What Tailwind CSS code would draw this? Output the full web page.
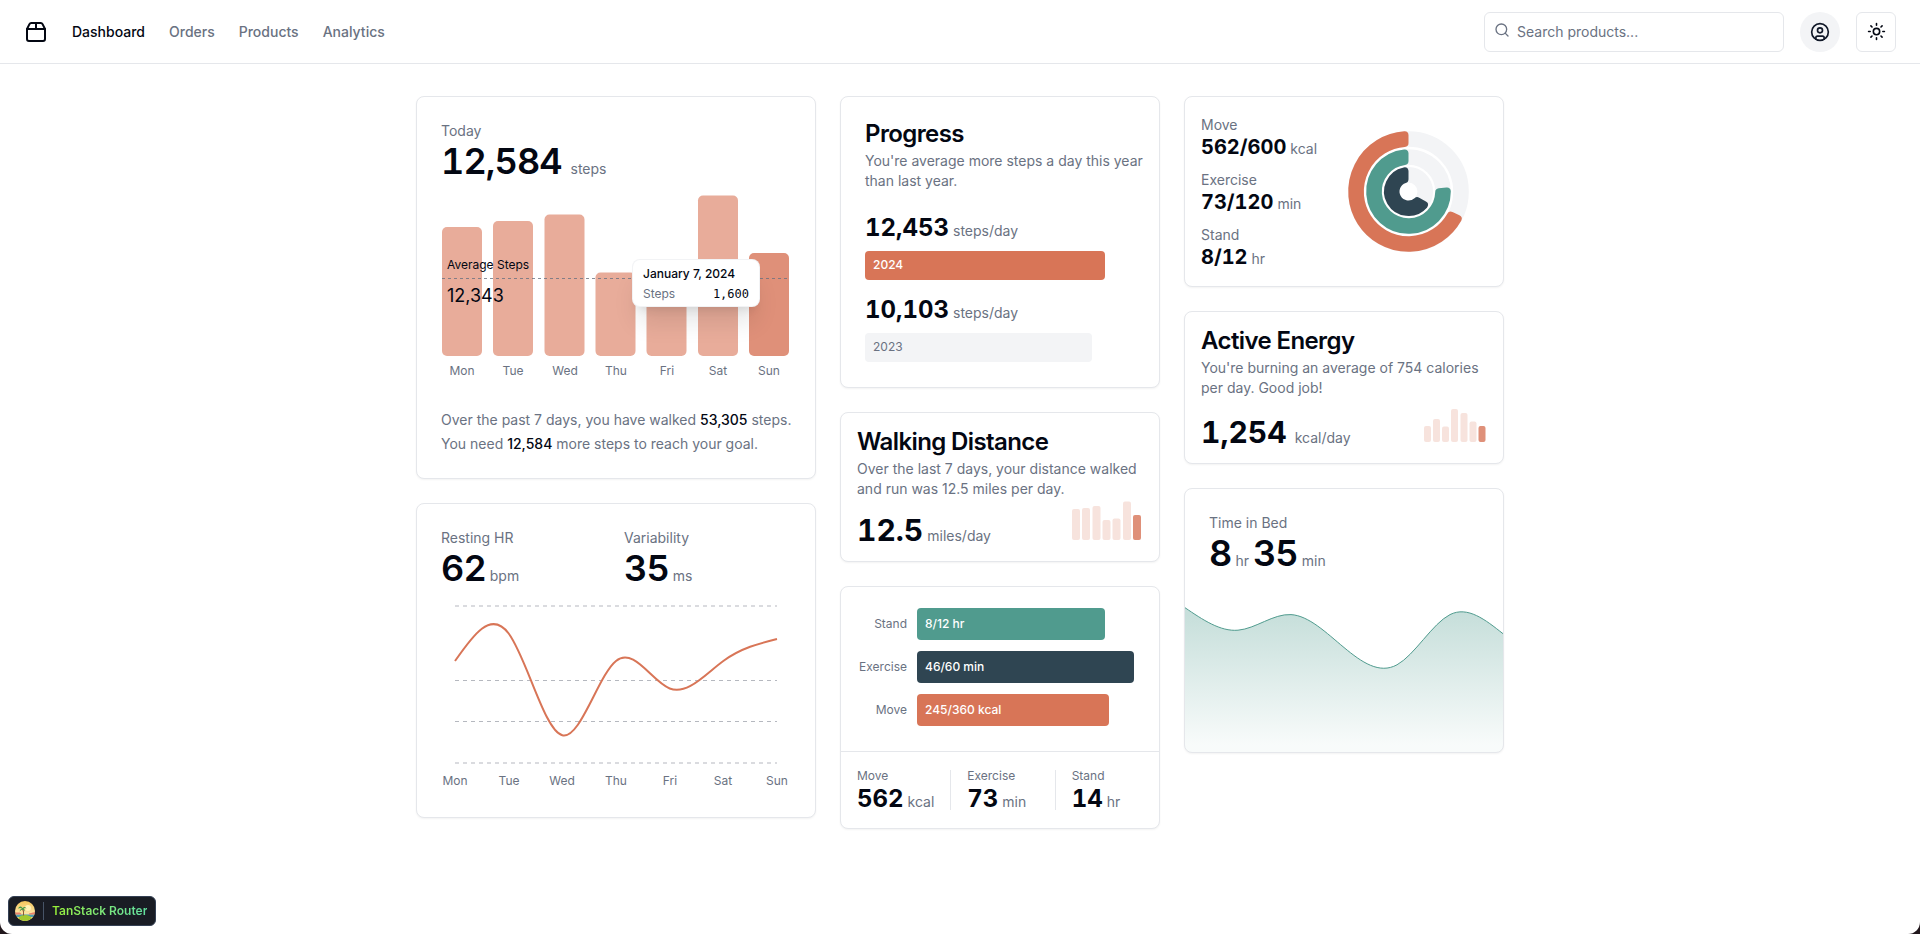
<!DOCTYPE html>
<html lang="en">
<head>
<meta charset="utf-8">
<meta name="viewport" content="width=device-width, initial-scale=1">
<title>Dashboard</title>
<script src="https://cdn.jsdelivr.net/npm/@tailwindcss/browser@4"></script>
</head>
<body class="bg-[#21171c] font-[Inter,sans-serif] text-gray-950 antialiased">
<div class="flex min-h-screen flex-col rounded-b-xl bg-white">

<header class="flex h-16 items-center gap-4 border-b border-gray-200 px-6">
  <nav class="flex items-center gap-6 text-sm font-medium text-gray-500">
    <a href="#" aria-label="Home" class="text-gray-950">
      <svg class="size-6" viewBox="0 0 24 24" fill="none" stroke="currentColor" stroke-width="2" stroke-linecap="round" stroke-linejoin="round"><path d="M3 9h18v10a2 2 0 0 1-2 2H5a2 2 0 0 1-2-2V9Z"/><path d="m3 9 2.45-4.9A2 2 0 0 1 7.24 3h9.52a2 2 0 0 1 1.8 1.1L21 9"/><path d="M12 3v6"/></svg>
    </a>
    <a href="#" class="text-gray-950">Dashboard</a>
    <a href="#">Orders</a>
    <a href="#">Products</a>
    <a href="#">Analytics</a>
  </nav>
  <form class="relative ml-auto">
    <svg class="absolute top-2.5 left-2.5 size-4 text-gray-500" viewBox="0 0 24 24" fill="none" stroke="currentColor" stroke-width="2" stroke-linecap="round" stroke-linejoin="round"><circle cx="11" cy="11" r="8"/><path d="m21 21-4.3-4.3"/></svg>
    <input type="search" aria-label="Search products" placeholder="Search products..." class="h-10 w-[300px] rounded-md border border-gray-200 bg-white pr-3 pl-8 text-sm placeholder:text-gray-500">
  </form>
  <button type="button" aria-label="Account" class="flex size-10 items-center justify-center rounded-full bg-gray-100 text-gray-900">
    <svg class="size-5" viewBox="0 0 24 24" fill="none" stroke="currentColor" stroke-width="2" stroke-linecap="round" stroke-linejoin="round"><circle cx="12" cy="12" r="10"/><circle cx="12" cy="10" r="3"/><path d="M7 20.662V19a2 2 0 0 1 2-2h6a2 2 0 0 1 2 2v1.662"/></svg>
  </button>
  <button type="button" aria-label="Toggle theme" class="flex size-10 items-center justify-center rounded-md border border-gray-200">
    <svg class="size-[19px]" viewBox="0 0 24 24" fill="none" stroke="currentColor" stroke-width="2" stroke-linecap="round" stroke-linejoin="round"><circle cx="12" cy="12" r="4"/><path d="M12 2v2M12 20v2M4.93 4.93l1.41 1.41M17.66 17.66l1.41 1.41M2 12h2M20 12h2M6.34 17.66l-1.41 1.41M19.07 4.93l-1.41 1.41"/></svg>
  </button>
</header>

<main class="mx-auto grid w-full max-w-6xl grid-cols-1 items-start gap-6 p-8 lg:grid-cols-[5fr_4fr_4fr]">

  <div class="grid min-w-0 grid-cols-1 gap-6">
    <section class="rounded-lg border border-gray-200 bg-white shadow-xs">
      <div class="p-6 pb-2">
        <p class="text-sm text-gray-500">Today</p>
        <h2 class="text-4xl font-semibold tracking-tight tabular-nums">12,584 <span class="text-sm font-normal tracking-normal text-gray-500">steps</span></h2>
      </div>
      <div class="relative mx-6 mb-6">
        <svg class="h-auto w-full" viewBox="0 0 350 197" role="img" aria-label="Steps per day">
          <g fill="#e8ac9a">
            <rect x="1" y="38" width="40" height="129" rx="5"/>
            <rect x="52" y="32" width="40" height="135" rx="5"/>
            <rect x="103.500" y="25.500" width="40" height="141.500" rx="5"/>
            <rect x="154.500" y="83.500" width="40" height="83.500" rx="5"/>
            <rect x="205.500" y="77" width="40" height="90" rx="5"/>
            <rect x="257" y="6.500" width="40" height="160.500" rx="5"/>
          </g>
          <rect x="308" y="64" width="40" height="103" rx="5" fill="#df9079"/>
          <path d="M1 89.500H348" stroke="#6b7280" stroke-dasharray="3 3" opacity=".8"/>
          <text x="6" y="80" class="fill-gray-950 text-xs">Average Steps</text>
          <text x="6" y="113" class="fill-gray-950 text-lg">12,343</text>
          <g class="fill-gray-500 text-xs" text-anchor="middle">
            <text x="21" y="186">Mon</text><text x="72" y="186">Tue</text><text x="124" y="186">Wed</text><text x="175" y="186">Thu</text><text x="226" y="186">Fri</text><text x="277" y="186">Sat</text><text x="328" y="186">Sun</text>
          </g>
        </svg>
        <div class="absolute top-[70px] left-[191px] grid w-32 gap-1.5 rounded-lg border border-gray-200/50 bg-white px-2.5 py-1.5 text-xs shadow-xl">
          <div class="font-medium">January 7, 2024</div>
          <div class="flex justify-between leading-none"><span class="text-gray-500">Steps</span><span class="font-['DejaVu_Sans_Mono',monospace] font-medium">1,600</span></div>
        </div>
      </div>
      <div class="grid gap-1 pr-2 pb-6 pl-6 text-sm text-gray-500">
        <p>Over the past 7 days, you have walked <span class="font-medium text-gray-950">53,305</span> steps.</p>
        <p>You need <span class="font-medium text-gray-950">12,584</span> more steps to reach your goal.</p>
      </div>
    </section>

    <section class="rounded-lg border border-gray-200 bg-white shadow-xs">
      <div class="flex gap-4 p-6 pb-2">
        <div class="flex-1">
          <p class="text-sm text-gray-500">Resting HR</p>
          <h2 class="flex items-baseline gap-1 text-4xl font-semibold tracking-tight tabular-nums">62 <span class="text-sm font-normal tracking-normal text-gray-500">bpm</span></h2>
        </div>
        <div class="flex-1">
          <p class="text-sm text-gray-500">Variability</p>
          <h2 class="flex items-baseline gap-1 text-4xl font-semibold tracking-tight tabular-nums">35 <span class="text-sm font-normal tracking-normal text-gray-500">ms</span></h2>
        </div>
      </div>
      <div class="px-6 pb-6">
        <svg class="h-auto w-full" viewBox="0 0 350 197" fill="none" role="img" aria-label="Resting heart rate per day">
          <path d="M14 10H336M14 84.500H336M14 125.500H336M14 167H336" stroke="#6b7280" stroke-opacity=".5" stroke-dasharray="4 4"/>
          <path d="M14 65C31.9 39.3 49.8 13.7 67.7 37.5C85.6 61.3 103.4 134.7 121.3 139.250C139.2 143.8 157.1 79.5 175 65C192.9 50.5 210.8 85.6 228.7 92.5C246.6 99.4 264.5 78 282.3 65C300.2 52 318.1 47.5 336 43" stroke="#d87557" stroke-width="2"/>
          <g class="fill-gray-500 text-xs" text-anchor="middle">
            <text x="14" y="189">Mon</text><text x="68" y="189">Tue</text><text x="121" y="189">Wed</text><text x="175" y="189">Thu</text><text x="229" y="189">Fri</text><text x="282" y="189">Sat</text><text x="336" y="189">Sun</text>
          </g>
        </svg>
      </div>
    </section>
  </div>

  <div class="grid min-w-0 grid-cols-1 gap-6">
    <section class="rounded-lg border border-gray-200 bg-white p-6 shadow-xs">
      <h2 class="text-2xl leading-[26px] font-semibold tracking-tight">Progress</h2>
      <p class="-mr-4 mt-1 text-sm text-gray-500">You're average more steps a day this year than last year.</p>
      <div class="mt-6 grid gap-4">
        <div class="grid gap-2">
          <div class="flex items-baseline gap-1 text-2xl leading-[26px] font-bold tabular-nums">12,453 <span class="text-sm leading-none font-normal text-gray-500">steps/day</span></div>
          <div class="flex h-8 items-center"><div class="flex h-[29px] items-center rounded-sm bg-[#d87557] px-2 text-xs font-medium text-white" style="width:88.9%">2024</div></div>
        </div>
        <div class="grid gap-2">
          <div class="flex items-baseline gap-1 text-2xl leading-[26px] font-bold tabular-nums">10,103 <span class="text-sm leading-none font-normal text-gray-500">steps/day</span></div>
          <div class="flex h-8 items-center"><div class="flex h-[29px] items-center rounded-sm bg-gray-100 px-2 text-xs text-gray-500" style="width:84.1%">2023</div></div>
        </div>
      </div>
    </section>

    <section class="rounded-lg border border-gray-200 bg-white p-4 shadow-xs">
      <h2 class="text-2xl leading-[26px] font-semibold tracking-tight">Walking Distance</h2>
      <p class="mt-1 text-sm text-gray-500">Over the last 7 days, your distance walked and run was 12.5 miles per day.</p>
      <div class="flex items-baseline justify-between gap-4">
        <div class="flex items-baseline gap-1 text-3xl leading-none font-bold tabular-nums">12.5 <span class="text-sm leading-none font-normal text-gray-500">miles/day</span></div>
        <svg class="h-[42px] w-[72px]" viewBox="0 0 72 42" fill="#f7e3dd" role="img" aria-label="Distance per day">
          <rect x="1" y="10" width="8" height="31" rx="2"/><rect x="11" y="9" width="8" height="32" rx="2"/><rect x="21.500" y="7" width="8" height="34" rx="2"/><rect x="31.500" y="21" width="8" height="20" rx="2"/><rect x="41.500" y="19.500" width="8" height="21.500" rx="2"/><rect x="52" y="2.500" width="8" height="38.500" rx="2"/><rect x="62" y="16" width="8" height="25" rx="2" fill="#df9079"/>
        </svg>
      </div>
    </section>

    <section class="rounded-lg border border-gray-200 bg-white shadow-xs">
      <div class="grid grid-cols-[50px_1fr] items-center gap-x-2.5 gap-y-[11px] px-4 pt-[21px] pb-[25px] text-xs">
        <span class="text-right text-gray-500">Stand</span>
        <div class="flex h-8 items-center rounded-sm bg-[#509b8e] px-2 font-medium text-white" style="width:83.2%">8/12 hr</div>
        <span class="text-right text-gray-500">Exercise</span>
        <div class="flex h-8 items-center rounded-sm bg-[#2f4552] px-2 font-medium text-white" style="width:95.9%">46/60 min</div>
        <span class="text-right text-gray-500">Move</span>
        <div class="flex h-8 items-center rounded-sm bg-[#d87557] px-2 font-medium text-white" style="width:85%">245/360 kcal</div>
      </div>
      <div class="flex items-center gap-2 border-t border-gray-200 p-4">
        <div class="grid flex-1 gap-0.5">
          <div class="text-xs text-gray-500">Move</div>
          <div class="flex items-baseline gap-1 text-2xl leading-[26px] font-bold tabular-nums">562 <span class="text-sm leading-none font-normal text-gray-500">kcal</span></div>
        </div>
        <div class="mx-2 h-10 w-px bg-gray-200"></div>
        <div class="grid flex-1 gap-0.5">
          <div class="text-xs text-gray-500">Exercise</div>
          <div class="flex items-baseline gap-1 text-2xl leading-[26px] font-bold tabular-nums">73 <span class="text-sm leading-none font-normal text-gray-500">min</span></div>
        </div>
        <div class="mx-2 h-10 w-px bg-gray-200"></div>
        <div class="grid flex-1 gap-0.5">
          <div class="text-xs text-gray-500">Stand</div>
          <div class="flex items-baseline gap-1 text-2xl leading-[26px] font-bold tabular-nums">14 <span class="text-sm leading-none font-normal text-gray-500">hr</span></div>
        </div>
      </div>
    </section>
  </div>

  <div class="grid min-w-0 grid-cols-1 gap-6">
    <section class="flex items-center justify-between gap-2 rounded-lg border border-gray-200 bg-white p-4 shadow-xs">
      <div class="grid gap-3">
        <div class="grid gap-0.5">
          <div class="text-sm text-gray-500">Move</div>
          <div class="flex items-baseline gap-1 text-xl leading-[21px] font-bold tabular-nums">562/600 <span class="text-sm leading-none font-normal text-gray-500">kcal</span></div>
        </div>
        <div class="grid gap-0.5">
          <div class="text-sm text-gray-500">Exercise</div>
          <div class="flex items-baseline gap-1 text-xl leading-[21px] font-bold tabular-nums">73/120 <span class="text-sm leading-none font-normal text-gray-500">min</span></div>
        </div>
        <div class="grid gap-0.5">
          <div class="text-sm text-gray-500">Stand</div>
          <div class="flex items-baseline gap-1 text-xl leading-[21px] font-bold tabular-nums">8/12 <span class="text-sm leading-none font-normal text-gray-500">hr</span></div>
        </div>
      </div>
      <svg class="size-[157px] shrink-0" viewBox="-78.500 -78.500 157 157" role="img" aria-label="Activity rings">
        <g fill="none" stroke="#f3f4f6" stroke-width="15.600"><circle r="52.500"/><circle r="34.500"/><circle r="16.750"/></g>
        <g stroke-width="8" stroke-linejoin="round">
          <path fill="#d87557" stroke="#d87557" d="M49.210 27.360A56.300 56.300 0 1 1 -4 -56.160L-4 -48.540A48.700 48.700 0 1 0 42.300 24.140Z"/>
          <path fill="#509b8e" stroke="#509b8e" d="M38.300 0A38.300 38.300 0 1 1 -4 -38.090L-4 -30.440A30.700 30.700 0 1 0 30.690 .8Z"/>
          <path fill="#2f4552" stroke="#2f4552" d="M15.420 13.520A20.500 20.500 0 1 1 -4 -20.110L-4 -12.370A13 13 0 1 0 8.710 9.650Z"/>
        </g>
      </svg>
    </section>

    <section class="rounded-lg border border-gray-200 bg-white p-4 shadow-xs">
      <h2 class="text-2xl leading-[26px] font-semibold tracking-tight">Active Energy</h2>
      <p class="mt-1 text-sm text-gray-500">You're burning an average of 754 calories per day. Good job!</p>
      <div class="flex items-baseline justify-between gap-4">
        <div class="flex items-baseline gap-2 text-3xl leading-none font-bold tabular-nums">1,254 <span class="text-sm leading-none font-normal text-gray-500">kcal/day</span></div>
        <svg class="h-[45px] w-16" viewBox="0 0 64 45" fill="#f7e3dd" role="img" aria-label="Energy per day">
          <rect x="1" y="28" width="7" height="16" rx="2"/><rect x="10" y="21" width="7" height="23" rx="2"/><rect x="19" y="28.500" width="7" height="15.500" rx="2"/><rect x="28" y="11" width="7" height="33" rx="2"/><rect x="37.500" y="15" width="7" height="29" rx="2"/><rect x="46.500" y="23.500" width="7" height="20.500" rx="2"/><rect x="55.500" y="28" width="7" height="16" rx="2" fill="#df9079"/>
        </svg>
      </div>
    </section>

    <section class="overflow-hidden rounded-lg border border-gray-200 bg-white shadow-xs">
      <div class="px-6 pt-6">
        <p class="text-sm text-gray-500">Time in Bed</p>
        <h2 class="flex items-baseline gap-1 text-4xl font-semibold tracking-tight tabular-nums">8 <span class="text-sm font-normal tracking-normal text-gray-500">hr</span> 35 <span class="text-sm font-normal tracking-normal text-gray-500">min</span></h2>
      </div>
      <svg class="block h-auto w-full" viewBox="0 0 318 179" role="img" aria-label="Time in bed">
        <defs><linearGradient id="bed" x1="0" y1="0" x2="0" y2="1"><stop offset=".05" stop-color="#509b8e" stop-opacity=".32"/><stop offset=".95" stop-color="#509b8e" stop-opacity=".04"/></linearGradient></defs>
        <path fill="url(#bed)" d="M0 34.7C17.7 46.7 35.3 58.7 53 57.2C70.7 55.7 88.3 40.6 106 41.6C123.7 42.6 141.3 59.8 159 74.5C176.7 89.2 194.3 101.5 212 91.8C229.7 82.1 247.3 50.5 265 41.6C282.7 32.7 300.3 46.7 318 60.7V179H0Z"/>
        <path fill="none" stroke="#509b8e" d="M0 34.7C17.7 46.7 35.3 58.7 53 57.2C70.7 55.7 88.3 40.6 106 41.6C123.7 42.6 141.3 59.8 159 74.5C176.7 89.2 194.3 101.5 212 91.8C229.7 82.1 247.3 50.5 265 41.6C282.7 32.7 300.3 46.7 318 60.7"/>
      </svg>
    </section>
  </div>
</main>

<button type="button" class="fixed bottom-2 left-2 flex h-[30px] items-center gap-2 rounded-md border border-[#344054] bg-[#191c24] pr-2 pl-1.5 text-xs font-semibold">
  <svg class="size-5" viewBox="0 0 20 20" aria-hidden="true">
    <defs>
      <linearGradient id="sky" x1="0" y1="0" x2="0" y2="1"><stop offset="0" stop-color="#f5c65c"/><stop offset=".6" stop-color="#fbe3a0"/></linearGradient>
      <clipPath id="disc"><circle cx="10" cy="10" r="10"/></clipPath>
    </defs>
    <g clip-path="url(#disc)">
      <path fill="url(#sky)" d="M0 0h20v20H0z"/>
      <circle cx="13" cy="7" r="3" fill="#fff3b8"/>
      <path fill="#4a9db0" d="M0 13.500h20V16H0z"/>
      <path fill="#e8806a" d="M0 11.500h5l2 2H0zM14 12.500l6-1.500v2.500h-6z"/>
      <path fill="#f0d070" d="M0 16h20v4H0z"/>
      <ellipse cx="10" cy="17.500" rx="6.500" ry="3.500" fill="#a3c92f"/>
      <path fill="none" stroke="#8a5a35" stroke-width="1.200" d="M8.500 14.500Q9 10 7.500 7.500"/>
      <path fill="#3f9a4a" d="M7.500 7Q5 4 3 7.500Q5.500 6.500 7 7.500Q5 8 4.500 10.500Q6.500 8.500 7.500 8.500Q9 8.500 9.500 10.500Q10 8 8.500 7.500Q10.500 6.500 11.500 8Q10.500 4.500 7.500 7Z"/>
    </g>
  </svg>
  <span class="h-[18px] w-px bg-[#475467]"></span>
  <span class="bg-linear-to-r from-[#98f030] to-[#62e0a0] bg-clip-text text-transparent">TanStack Router</span>
</button>
</div>
</body>
</html>
